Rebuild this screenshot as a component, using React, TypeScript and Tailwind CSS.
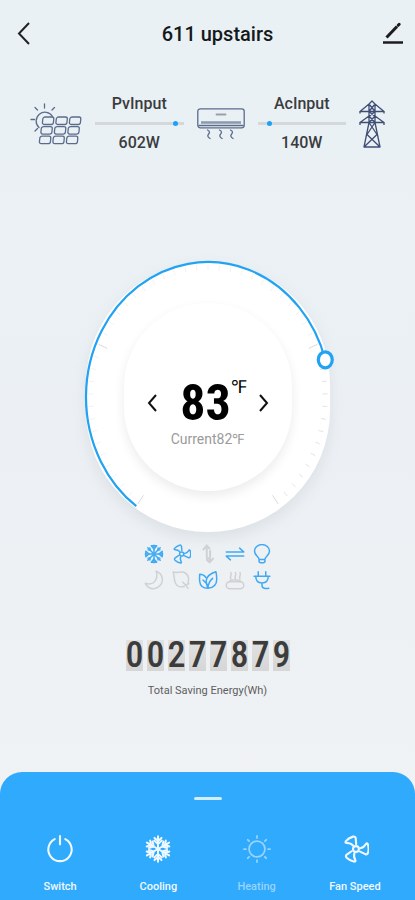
import type { ReactNode } from "react";
import { clsx } from "clsx";

const CX = 122;
const CY = 135;
const STEPS = 52;
const START = 126;
const SWEEP = 288;
const VALUE = 218;

// Point on the dial's ellipse, `scale` 1 being the rim
const point = (deg: number, scale = 1) => {
  const a = (deg * Math.PI) / 180;
  return { x: CX + CX * scale * Math.cos(a), y: CY + CY * scale * Math.sin(a) };
};

const Icon = ({ className, children }: { className?: string; children: ReactNode }) => (
  <svg
    viewBox="0 0 24 24"
    className={className}
    fill="none"
    stroke="currentColor"
    strokeWidth="1.8"
    strokeLinecap="round"
    strokeLinejoin="round"
    aria-hidden="true"
  >
    {children}
  </svg>
);

const Snowflake = () => (
  <g strokeWidth="1.8">
    {[0, 45, 90, 135, 180, 225, 270, 315].map((r) => (
      <g key={r} transform={`rotate(${r} 12 12)`}>
        <path d="M12 12V1.5" />
        <path d={r % 90 === 0 ? "M8.8 2.2 12 6l3.200-3.800z" : "M10.500 3.500 12 5.500l1.500-2"} />
      </g>
    ))}
  </g>
);

const Flake = () => (
  <g strokeWidth="1.7">
    {[0, 60, 120, 180, 240, 300].map((r) => (
      <g key={r} transform={`rotate(${r} 12 12)`}>
        <path d="M12 12V1M9 2.500 12 5.200l3-2.700M8.800 4.800 12 7.800l3.200-3" />
      </g>
    ))}
  </g>
);

const Fan = () => (
  <g transform="translate(0.8 0)">
    <circle cx="12" cy="12" r="2.5" />
    {[0, 120, 240].map((r) => (
      <path
        key={r}
        transform={`rotate(${r} 12 12)`}
        d="M12.200 7.800 11.800 2.800Q11.500 1 9.500 1.400 5.500 2.500 3.200 5.500 2.600 6.800 4.200 6.800 7.800 6.800 9.600 9.200"
      />
    ))}
  </g>
);

const modes = [
  { name: "cool", on: true, icon: <Snowflake /> },
  { name: "fan", on: true, icon: <Fan /> },
  {
    name: "swing",
    on: false,
    icon: <path d="M6.500 6.500 10.500 2v13c0 3 4 3 4 0V8.500M10.500 2l3.500 3.500M14 22l4-4.500M14 22l-3.500-3M14.200 16v6" strokeWidth="2.4" />,
  },
  { name: "exchange", on: true, icon: <path d="M1.500 9.500h21L17.500 5M22.500 14.500h-21L6.500 19" /> },
  {
    name: "light",
    on: true,
    icon: <path d="M8.500 18.500c0-3.500-5.500-4.500-5.500-10a9 7.800 0 0 1 18 0c0 5.500-5.500 6.500-5.500 10zM8.500 18.500v2.500c0 2 7 2 7 0v-2.500" />,
  },
  { name: "sleep", on: false, icon: <path d="M14.500 1.500c9 3 10 14 2.500 19-6 4-13.500 1-15.500-4.500 5 1.500 10 .5 12.500-4 2-3.500 2-7 .5-10.500z" /> },
  {
    name: "mildew",
    on: false,
    icon: <path d="M16 19.500c-4 1.500-8.500.5-10.500-3.500C3 11.500 4.500 6 2.500 2.500 7 4 10 2 14 2.500c6 1 8.500 7 6.500 13M14 14.500l3.500 3.500 4-1.500M17.500 18l3 4" />,
  },
  {
    name: "eco",
    on: true,
    icon: <path d="M12 22c-6 0-9.500-3-10-8.500C1.700 9.500 2 7 2 5c3 0 6 1.500 7.500 4M12 22c7-1 10.500-5 10.500-11 0-3-.3-6-1-9C15 4 11 7 10 12c-.5 3 .5 6 2 10zM12 22c0-5 2-9 5.500-12M11 17l-5-5" />,
  },
  {
    name: "heater",
    on: false,
    icon: (
      <>
        <rect x="1.5" y="14" width="21" height="8.500" rx="4.200" />
        <path d="M7 10.500c-2-3 2-4 0-7.500M12.500 10.500c-2-3 2-4 0-7.500M18 10.500c-2-3 2-4 0-7.500M5 14c1-1.500 2-2 3.500-2h7c1.500 0 2.500.5 3.500 2" />
      </>
    ),
  },
  { name: "power", on: true, icon: <path d="M2.500 7.500h19M7.500 7.500V2M16.500 7.500V2M4.500 7.500c0 5 2.500 8 7.500 8s7.500-3 7.500-8M12 15.500v3c0 4 4.500 4 8 3.500" /> },
];

const controls = [
  {
    label: "Switch",
    on: true,
    icon: <path d="M12 1v7M7.500 3.500a10 10 0 1 0 9 0" />,
  },
  { label: "Cooling", on: true, icon: <Flake /> },
  {
    label: "Heating",
    on: false,
    icon: (
      <g strokeWidth="1.5">
        <circle cx="12" cy="12" r="6.800" />
        {[0, 45, 90, 135, 180, 225, 270, 315].map((r) => (
          <path key={r} transform={`rotate(${r} 12 12)`} d="M12 .8v1.700" />
        ))}
      </g>
    ),
  },
  { label: "Fan Speed", on: true, icon: <Fan /> },
];

const SolarPanel = () => (
  <svg viewBox="0 0 52 42" className="h-[42px] w-[52px] shrink-0 text-[#5b6b8c]" fill="none" stroke="currentColor" strokeWidth="1.3" strokeLinecap="round" aria-hidden="true">
    <path d="M9 24.500A8.800 8.800 0 1 1 22.500 13.500" />
    <path d="M14.500 1v4M5 4.500l2.500 2.500M24.500 4.500 22 7M1 16.500h3.500M5 28l2.500-2.500" />
    {[0, 1, 2].map((row) =>
      [0, 1, 2].map((col) => (
        <rect
          key={`${row}-${col}`}
          x="0"
          y="0"
          width="11"
          height="7.5"
          rx="2"
          transform={`translate(${13 - row * 1.5 + col * 13.500} ${14 + row * 9.600}) skewX(-6)`}
        />
      ))
    )}
  </svg>
);

const AirConditioner = () => (
  <svg viewBox="0 0 48 32" className="h-8 w-12 shrink-0 text-[#5b6b8c]" fill="none" stroke="currentColor" strokeWidth="1.3" strokeLinecap="round" aria-hidden="true">
    <rect x="0.8" y="0.8" width="46.400" height="19" rx="2.500" />
    <path d="M19.500 6.500h9" stroke="#9aa0a8" strokeWidth="1.800" />
    <path d="M4 14.500h40" stroke="#8b97ab" strokeWidth="2.500" strokeLinecap="butt" />
    <path d="M2 17.500h44" />
    {[11.5, 23.5, 34.5].map((x) => (
      <path key={x} d={`M${x - 1} 22c3 1.500 2 3 .8 4.500s0 3 1.800 4`} />
    ))}
  </svg>
);

const Pylon = () => (
  <svg viewBox="0 0 26 48" className="h-12 w-[26px] shrink-0 text-[#3f4d75]" fill="none" stroke="currentColor" strokeWidth="1.3" strokeLinejoin="round" aria-hidden="true">
    <path d="M10 4 13 1l3 3M10 4 1 11.500h24L16 4M10 4v18M16 4v18M10 4l6 7.500M16 4l-6 7.500M10 11.500l6 5M16 11.500l-6 5M10 16 1 22.500h24L16 16M10 16l6 6.500M16 16l-6 6.500" />
    <path d="M10 22.500 5 47h16l-5-24.500M10 22.500l8 12M16 22.500l-8 12M8 34.500 21 47M18 34.500 5 47" />
    <path d="M1 11.500v2M25 11.500v2M1 22.500v2.500M25 22.500v2.500" />
  </svg>
);

const Flow = ({ name, watts, position }: { name: string; watts: string; position: string }) => (
  <div className="flex flex-1 flex-col items-center text-base leading-5 font-medium text-[#3a3c3f]">
    <span>{name}</span>
    <div className="relative my-2 h-[3px] w-full bg-[#d5d8db]">
      <span className={clsx("absolute -top-px size-[5px] rounded-full bg-[#1ba1f5]", position)} />
    </div>
    <span>{watts}</span>
  </div>
);

const Chevron = ({ d }: { d: string }) => (
  <svg viewBox="0 0 16 20" className="h-5 w-4" fill="none" stroke="#111" strokeWidth="2" aria-hidden="true">
    <path d={d} />
  </svg>
);

const Dial = () => {
  const from = point(START);
  const to = point(START + VALUE);
  return (
    <section className="grid h-[270px] w-[244px] place-items-center rounded-full bg-white shadow-[0_6px_14px_rgba(120,135,150,0.15)]">
      <svg viewBox="0 0 244 270" className="col-start-1 row-start-1 h-[270px] w-[244px] overflow-visible" fill="none" aria-hidden="true">
        {Array.from({ length: STEPS + 1 }, (_, i) => {
          const major = [0, 14, 38, 52].includes(i);
          const deg = START + (i * SWEEP) / STEPS;
          const a = point(deg, 0.98);
          const b = point(deg, major ? 0.9 : 0.94);
          return (
            <line
              key={i}
              x1={a.x}
              y1={a.y}
              x2={b.x}
              y2={b.y}
              stroke={major ? "#dadada" : i > 38 ? "#e4e4e4" : "#f2f2f2"}
            />
          );
        })}
        <path d={`M${from.x} ${from.y}A${CX} ${CY} 0 1 1 ${to.x} ${to.y}`} stroke="#22a2f2" strokeWidth="2.200" />
        <ellipse cx={to.x} cy={to.y} rx="7" ry="8" fill="#fff" stroke="#22a2f2" strokeWidth="3.200" />
      </svg>
      <div className="col-start-1 row-start-1 flex h-[188px] w-[168px] flex-col items-center rounded-full bg-white pt-[74px] shadow-[0_5px_12px_rgba(0,0,0,0.08)]">
        <div className="flex w-full items-center justify-between px-5">
          <button type="button" aria-label="Lower">
            <Chevron d="M12 2 5 10l7 8" />
          </button>
          <p className="flex items-start font-['Roboto_Condensed','Roboto',sans-serif] text-[50px] leading-[52px] font-bold text-black">
            83<span className="-mr-3 text-lg leading-5 font-medium">℉</span>
          </p>
          <button type="button" aria-label="Raise">
            <Chevron d="M5 2l7 8-7 8" />
          </button>
        </div>
        <p className="text-sm leading-5 text-[#9b9b9b]">Current82℉</p>
      </div>
    </section>
  );
};

export default function App() {
  return (
    <main className="flex min-h-screen flex-col items-center bg-linear-to-b from-[#e9f1f5] via-[#ecf0f4] to-[#f1f3f4] font-['Roboto',sans-serif]">
      <header className="flex h-[68px] w-full items-center justify-between pr-3 pl-4">
        <button type="button" aria-label="Back">
          <svg viewBox="0 0 16 24" className="h-6 w-4" fill="none" stroke="#222" strokeWidth="2" aria-hidden="true">
            <path d="M13 1 3 11.500 13 22" />
          </svg>
        </button>
        <h1 className="ml-5 text-xl font-medium text-[#16191c]">611 upstairs</h1>
        <button type="button" aria-label="Edit">
          <svg viewBox="0 0 20 24" className="h-6 w-5" fill="none" stroke="#1c1c1c" aria-hidden="true">
            <path d="M3.500 15.500 14 4.500" strokeWidth="3" />
            <path d="M15.200 3.300l1-1" strokeWidth="3" strokeLinecap="round" />
            <path d="M0 20.500h20" strokeWidth="2.500" />
          </svg>
        </button>
      </header>

      {/* Power flow */}
      <section className="mt-[26px] flex w-full items-center gap-[13px] px-[30px]">
        <SolarPanel />
        <Flow name="PvInput" watts="602W" position="left-[88%]" />
        <AirConditioner />
        <Flow name="AcInput" watts="140W" position="left-[11%]" />
        <Pylon />
      </section>

      <div className="mt-[109px]">
        <Dial />
      </div>

      {/* Active modes */}
      <ul className="mt-3 grid grid-cols-5 gap-x-[7px] gap-y-[6px]">
        {modes.map((m) => (
          <li key={m.name} className={m.on ? "text-[#3eaaf3]" : "text-[#cfd1d3]"}>
            <Icon className="size-5">{m.icon}</Icon>
          </li>
        ))}
      </ul>

      <section className="mt-[50px] flex flex-col items-center">
        <div className="flex gap-1">
          {"00277879".split("").map((digit, i) => (
            <span
              key={i}
              className="h-[31px] w-[17px] bg-linear-to-b from-[#e2e2e2] to-[#d6d6d6] text-center font-['Roboto_Condensed','Roboto',sans-serif] text-4xl leading-[31px] font-medium text-[#3c3c3c]"
            >
              {digit}
            </span>
          ))}
        </div>
        <p className="mt-3 text-[11px] leading-4 text-[#5c5e60]">Total Saving Energy(Wh)</p>
      </section>

      <footer className="mt-auto flex w-full flex-col items-center rounded-t-[22px] bg-[#30aafd] px-[11px] pt-[25px] pb-[5px]">
        <span className="h-[3px] w-7 rounded-full bg-[#d3edff]" />
        <nav className="mt-[34px] grid w-full grid-cols-4">
          {controls.map((c) => (
            <button
              key={c.label}
              type="button"
              className={clsx("flex flex-col items-center gap-[15px]", c.on ? "text-[#f0f9ff]" : "text-[#97d4fe]")}
            >
              <Icon className="h-[30px] w-7">{c.icon}</Icon>
              <span className="text-[11px] leading-4 font-medium">{c.label}</span>
            </button>
          ))}
        </nav>
      </footer>
    </main>
  );
}
